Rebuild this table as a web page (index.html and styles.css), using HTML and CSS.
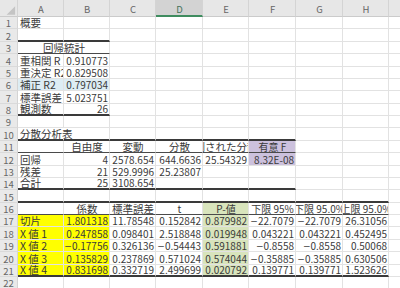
FILE: index.html
```html
<!DOCTYPE html>
<html lang="ja">
<head>
<meta charset="utf-8">
<title>回帰分析</title>
<link rel="stylesheet" href="styles.css">
</head>
<body>
<div class="sheet">
  <div class="row hdr">
    <div class="corner"><svg width="18" height="17" viewBox="0 0 18 17"><polygon points="16,6 16,15 7,15" fill="#c4c4c4"/></svg></div>
    <div>A</div><div>B</div><div>C</div><div class="sel">D</div><div>E</div><div>F</div><div>G</div><div>H</div><div></div>
  </div>
  <div class="row"><div class="rh">1</div><div class="jp">概要</div><div></div><div></div><div></div><div></div><div></div><div></div><div></div><div></div></div>
  <div class="row"><div class="rh">2</div><div class="tk"></div><div class="tk"></div><div></div><div></div><div></div><div></div><div></div><div></div><div></div></div>
  <div class="row"><div class="rh">3</div><div class="span2 c th jp">回帰統計</div><div></div><div></div><div></div><div></div><div></div><div></div><div></div></div>
  <div class="row"><div class="rh">4</div><div class="jp">重相関 R</div><div class="r">0.910773</div><div></div><div></div><div></div><div></div><div></div><div></div><div></div></div>
  <div class="row"><div class="rh">5</div><div class="jp">重決定 R2</div><div class="r">0.829508</div><div></div><div></div><div></div><div></div><div></div><div></div><div></div></div>
  <div class="row"><div class="rh">6</div><div class="blue jp">補正 R2</div><div class="r blue">0.797034</div><div></div><div></div><div></div><div></div><div></div><div></div><div></div></div>
  <div class="row"><div class="rh">7</div><div class="jp">標準誤差</div><div class="r">5.023751</div><div></div><div></div><div></div><div></div><div></div><div></div><div></div></div>
  <div class="row"><div class="rh">8</div><div class="tk jp">観測数</div><div class="r tk">26</div><div></div><div></div><div></div><div></div><div></div><div></div><div></div></div>
  <div class="row"><div class="rh">9</div><div></div><div></div><div></div><div></div><div></div><div></div><div></div><div></div><div></div></div>
  <div class="row"><div class="rh">10</div><div class="tk ov jp">分散分析表</div><div class="tk"></div><div class="tk"></div><div class="tk"></div><div class="tk"></div><div class="tk"></div><div></div><div></div><div></div></div>
  <div class="row"><div class="rh">11</div><div class="th"></div><div class="c th jp">自由度</div><div class="c th jp">変動</div><div class="c th jp">分散</div><div class="c th jp">観測された分散比</div><div class="c th purple">有意 F</div><div></div><div></div><div></div></div>
  <div class="row"><div class="rh">12</div><div class="jp">回帰</div><div class="r">4</div><div class="r">2578.654</div><div class="r">644.6636</div><div class="r">25.54329</div><div class="r purple">8.32E-08</div><div></div><div></div><div></div></div>
  <div class="row"><div class="rh">13</div><div class="jp">残差</div><div class="r">21</div><div class="r">529.9996</div><div class="r">25.23807</div><div></div><div></div><div></div><div></div><div></div></div>
  <div class="row"><div class="rh">14</div><div class="tk jp">合計</div><div class="r tk">25</div><div class="r tk">3108.654</div><div class="tk"></div><div class="tk"></div><div class="tk"></div><div></div><div></div><div></div></div>
  <div class="row"><div class="rh">15</div><div class="tk"></div><div class="tk"></div><div class="tk"></div><div class="tk"></div><div class="tk"></div><div class="tk"></div><div class="tk"></div><div class="tk"></div><div></div></div>
  <div class="row"><div class="rh">16</div><div class="th"></div><div class="c th jp">係数</div><div class="c th jp">標準誤差</div><div class="c th">t</div><div class="c th green">P-値</div><div class="c th">下限 95%</div><div class="c th">下限 95.0%</div><div class="c th">上限 95.0%</div><div></div></div>
  <div class="row"><div class="rh">17</div><div class="yellow jp">切片</div><div class="r yellow">1.801318</div><div class="r">11.78548</div><div class="r">0.152842</div><div class="r green">0.879982</div><div class="r"><span class="m">−</span>22.7079</div><div class="r"><span class="m">−</span>22.7079</div><div class="r">26.31056</div><div></div></div>
  <div class="row"><div class="rh">18</div><div class="yellow jp">X 値 1</div><div class="r yellow">0.247858</div><div class="r">0.098401</div><div class="r">2.518848</div><div class="r green">0.019948</div><div class="r">0.043221</div><div class="r">0.043221</div><div class="r">0.452495</div><div></div></div>
  <div class="row"><div class="rh">19</div><div class="yellow jp">X 値 2</div><div class="r yellow"><span class="m">−</span>0.17756</div><div class="r">0.326136</div><div class="r"><span class="m">−</span>0.54443</div><div class="r green">0.591881</div><div class="r"><span class="m">−</span>0.8558</div><div class="r"><span class="m">−</span>0.8558</div><div class="r">0.50068</div><div></div></div>
  <div class="row"><div class="rh">20</div><div class="yellow jp">X 値 3</div><div class="r yellow">0.135829</div><div class="r">0.237869</div><div class="r">0.571024</div><div class="r green">0.574044</div><div class="r"><span class="m">−</span>0.35885</div><div class="r"><span class="m">−</span>0.35885</div><div class="r">0.630506</div><div></div></div>
  <div class="row"><div class="rh">21</div><div class="yellow tk jp">X 値 4</div><div class="r yellow tk">0.831698</div><div class="r tk">0.332719</div><div class="r tk">2.499699</div><div class="r green tk">0.020792</div><div class="r tk">0.139771</div><div class="r tk">0.139771</div><div class="r tk">1.523626</div><div></div></div>
  <div class="row"><div class="rh">22</div><div></div><div></div><div></div><div></div><div></div><div></div><div></div><div></div><div></div></div>
</div>
</body>
</html>
```

FILE: styles.css
```css
html, body {
  margin: 0;
  padding: 0;
  background: #ffffff;
}

body {
  width: 400px;
  height: 288px;
  overflow: hidden;
  font-family: "Noto Sans CJK JP", "Noto Sans", sans-serif;
  font-size: 10px;
  color: #3a3a3a;
}

.sheet {
  display: flex;
  flex-direction: column;
}

.row {
  display: grid;
  grid-template-columns: 18px 46px 46px 46px 47px 46px 47px 47px 46px 20px;
  height: 12.38px;
}

.row > div {
  box-sizing: border-box;
  border-right: 1px solid #e2e2e2;
  border-bottom: 1px solid #e2e2e2;
  overflow: hidden;
  white-space: nowrap;
  line-height: 10px;
  padding: 0 1px 0 2px;
  display: flex;
  align-items: flex-end;
  justify-content: flex-start;
}

/* column header row */
.hdr {
  height: 17px;
}

.hdr > div {
  background: #e7e7e7;
  border-right-color: #d4d4d4;
  border-bottom-color: #cbcbcb;
  color: #666666;
  font-size: 9.5px;
  justify-content: center;
  padding-bottom: 2px;
}

.hdr > .corner {
  padding: 0;
  align-items: stretch;
}

.hdr > .sel {
  background: #d3d3d3;
  color: #44725a;
  border-bottom: 2px solid #3f8c5f;
  padding-bottom: 1px;
}

/* row numbers */
.row > .rh {
  background: #e9e9e9;
  border-right-color: #d4d4d4;
  border-bottom-color: #dadada;
  color: #666666;
  font-size: 9.5px;
  justify-content: center;
  padding: 0;
}

.row > .jp {
  font-size: 10.5px;
}

.row > .r {
  justify-content: flex-end;
}

.row > .c {
  justify-content: center;
}

.row > .span2 {
  grid-column: span 2;
}

.row > .ov {
  overflow: visible;
  border-right-color: transparent;
}

/* table rules */
.row > .tk {
  border-bottom: 2px solid #3a3a3a;
}

.row > .th {
  border-bottom: 1px solid #4a4a4a;
}

/* fills */
.blue {
  background: #ddedf4;
}

.purple {
  background: #ccc1dd;
}

.yellow {
  background: #ffff00;
}

.green {
  background: #d8e4bc;
}

.m {
  font-family: "DejaVu Sans", sans-serif;
  font-size: 9px;
}
```
